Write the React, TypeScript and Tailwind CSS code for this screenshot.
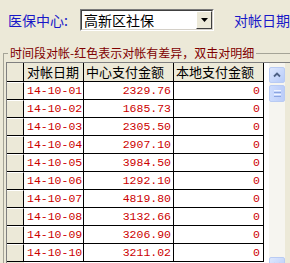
import React from 'react'

const rows: [string, string][] = [
  ['14-10-01', '2329.76'],
  ['14-10-02', '1685.73'],
  ['14-10-03', '2305.50'],
  ['14-10-04', '2907.10'],
  ['14-10-05', '3984.50'],
  ['14-10-06', '1292.10'],
  ['14-10-07', '4819.80'],
  ['14-10-08', '3132.66'],
  ['14-10-09', '3206.90'],
  ['14-10-10', '3211.02'],
]

const cjk = "font-['SimSun','Noto_Sans_CJK_SC',sans-serif]"
const mono = "font-['Liberation_Mono','DejaVu_Sans_Mono',monospace]"

function ScrollButton({ up }: { up: boolean }) {
  return (
    <div className="w-[16px] h-[16px] rounded-[2px] border border-[#b9cbf3] bg-gradient-to-br from-[#dde7fd] to-[#b7cbf9] flex items-center justify-center">
      <svg width="8" height="6" viewBox="0 0 8 6">
        <path
          d={up ? 'M1 4.5 L4 1.5 L7 4.5' : 'M1 1.5 L4 4.5 L7 1.5'}
          fill="none"
          stroke="#4d6185"
          strokeWidth="1.8"
        />
      </svg>
    </div>
  )
}

function Scrollbar() {
  return (
    <div className="w-[16px] flex flex-col bg-[#f6f5f0] pt-[4px] pb-[1px]">
      <ScrollButton up />
      {/* thumb */}
      <div className="mt-[2px] w-[16px] h-[17px] rounded-[2px] border border-[#b9cbf3] bg-gradient-to-r from-[#cddcfd] to-[#bccdf9] flex flex-col items-center justify-center gap-[1px]">
        <div className="w-[7px] h-[1px] bg-[#eef3fe]" />
        <div className="w-[7px] h-[1px] bg-[#8ca5e0]" />
        <div className="w-[7px] h-[1px] bg-[#eef3fe]" />
        <div className="w-[7px] h-[1px] bg-[#8ca5e0]" />
      </div>
      <div className="flex-1" />
      <ScrollButton up={false} />
    </div>
  )
}

export default function App() {
  return (
    <div className={`w-[290px] h-[263px] overflow-hidden bg-[#ece9d8] ${cjk}`}>
      {/* top bar */}
      <div className="flex items-center pt-[9px] h-[31px]">
        <div className="w-[82px] pl-[8px] text-[14px] leading-[16px] text-[#1818c8] whitespace-nowrap">
          医保中心:
        </div>
        <div className="w-[138px] h-[22px] flex border border-t-[#7a7a7a] border-l-[#7a7a7a] border-r-white border-b-white">
          <div className="flex-1 flex border border-t-[#404040] border-l-[#404040] border-r-[#d4d0c8] border-b-[#d4d0c8] bg-white">
            <div className="flex-1 pl-[2px] text-[14px] leading-[18px] text-black whitespace-nowrap">
              高新区社保
            </div>
            <div className="w-[16px] h-[18px] bg-[#ece9d8] border border-t-white border-l-white border-r-[#404040] border-b-[#404040] flex items-center justify-center">
              <svg width="7" height="4" viewBox="0 0 7 4">
                <path d="M0 0 H7 L3.5 4 Z" fill="#000" />
              </svg>
            </div>
          </div>
        </div>
        <div className="ml-[20px] text-[14px] leading-[16px] text-[#1818c8] whitespace-nowrap">
          对帐日期
        </div>
      </div>

      {/* group box */}
      <fieldset className="mt-[14px] ml-[3px] w-[300px] border border-[#a5a497] px-[2px] pt-[1px]">
        <legend className="ml-[2px] px-[2px] text-[12px] leading-[16px] text-[#800000] whitespace-nowrap">
          时间段对帐-红色表示对帐有差异，双击对明细
        </legend>

        {/* grid */}
        <div className="flex h-[212px] overflow-hidden border-t border-l border-[#808080] bg-white">
          <div className="w-[257px] flex flex-col">
            <div className="flex h-[19px] border-b border-black bg-[#ece9d8] text-[13px] leading-[18px] text-black">
              <div className="w-[17px] border-r border-black" />
              <div className="w-[60px] border-r border-black pl-[3px] whitespace-nowrap">对帐日期</div>
              <div className="w-[90px] border-r border-black pl-[2px] whitespace-nowrap">中心支付金额</div>
              <div className="w-[90px] border-r border-black pl-[2px] whitespace-nowrap">本地支付金额</div>
            </div>
            {rows.map(([date, amount]) => (
              <div
                key={date}
                className={`flex h-[18px] shrink-0 border-b border-black text-[11.5px] leading-[17px] text-[#cc0000] ${mono}`}
              >
                <div className="w-[17px] border-r border-black bg-[#ece9d8] border-t border-t-white" />
                <div className="w-[60px] border-r border-black bg-white pl-[3px] whitespace-nowrap">{date}</div>
                <div className="w-[90px] border-r border-black bg-white pr-[2px] text-right">{amount}</div>
                <div className="w-[90px] border-r border-black bg-white pr-[3px] text-right">0</div>
              </div>
            ))}
            <div className="flex flex-1">
              <div className="w-[17px] bg-[#ece9d8]" />
            </div>
          </div>
          <div className="w-[5px] bg-white" />
          <Scrollbar />
          <div className="flex-1 bg-[#ece9d8]" />
        </div>
      </fieldset>
    </div>
  )
}
